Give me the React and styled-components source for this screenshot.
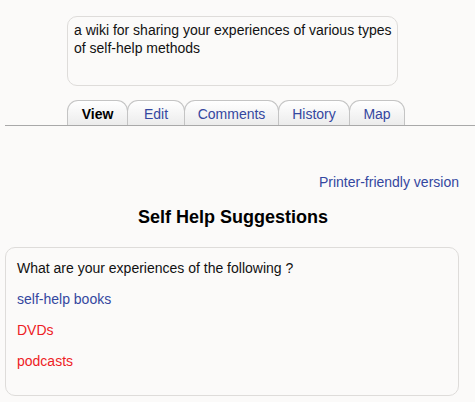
import React from "react";
import styled, { createGlobalStyle } from "styled-components";

const Global = createGlobalStyle`
  html, body { margin: 0; padding: 0; background: #fbfaf9; }
  body { font-family: "Liberation Sans", Arial, sans-serif; font-size: 14px; color: #111; }
`;

const Page = styled.div`
  padding-top: 16px;
  width: 475px;
`;

const Description = styled.div`
  margin-left: 67px;
  width: 331px;
  height: 70px;
  box-sizing: border-box;
  border: 1px solid #dedcda;
  border-radius: 10px;
  padding: 4px 0 4px 6px;
  line-height: 18px;
  color: #111;
`;

const TabBar = styled.div`
  margin-top: 14px;
  margin-left: 5px;
  padding-left: 62px;
  display: flex;
  border-bottom: 1px solid #a9a9a9;
  height: 25px;
  box-sizing: content-box;
`;

const Tab = styled.a`
  display: flex;
  align-items: center;
  justify-content: center;
  box-sizing: border-box;
  width: ${(p) => p.$w}px;
  height: 25px;
  margin-left: ${(p) => (p.$first ? 0 : -1)}px;
  border: 1px solid #c4c4c4;
  border-bottom: none;
  border-radius: 11px 11px 0 0;
  background: linear-gradient(#ffffff, #ececec);
  color: ${(p) => (p.$active ? "#000" : "#3447a0")};
  font-weight: ${(p) => (p.$active ? "bold" : "normal")};
  font-size: 14px;
  padding-top: 1px;
  text-decoration: none;
`;

const PrintRow = styled.div`
  margin-top: 48px;
  display: flex;
  justify-content: flex-end;
  padding-right: 16px;
  line-height: 16px;
`;

const Link = styled.a`
  color: ${(p) => (p.$missing ? "#ee1c25" : "#3447a0")};
  text-decoration: none;
`;

const Heading = styled.h2`
  margin: 17px 0 0;
  text-align: center;
  font-size: 18px;
  line-height: 21px;
  font-weight: bold;
  color: #000;
  padding-right: 9px;
`;

const ContentBox = styled.div`
  margin: 19px 0 0 5px;
  width: 454px;
  box-sizing: border-box;
  border: 1px solid #dedcda;
  border-radius: 10px;
  padding: 12px 11px 26px;
  display: flex;
  flex-direction: column;
  gap: 15px;
  line-height: 16px;
`;

const Line = styled.div`
  color: #111;
`;

const tabs = [
  { label: "View", w: 61, active: true },
  { label: "Edit", w: 58 },
  { label: "Comments", w: 95 },
  { label: "History", w: 72 },
  { label: "Map", w: 56 },
];

export default function App() {
  return (
    <>
      <Global />
      <Page>
        <Description>
          a wiki for sharing your experiences of various types of self-help methods
        </Description>
        <TabBar>
          {tabs.map((t, i) => (
            <Tab key={t.label} $w={t.w} $active={t.active} $first={i === 0}>
              {t.label}
            </Tab>
          ))}
        </TabBar>
        <PrintRow>
          <Link>Printer-friendly version</Link>
        </PrintRow>
        <Heading>Self Help Suggestions</Heading>
        <ContentBox>
          <Line>What are your experiences of the following ?</Line>
          <Line><Link>self-help books</Link></Line>
          <Line><Link $missing>DVDs</Link></Line>
          <Line><Link $missing>podcasts</Link></Line>
        </ContentBox>
      </Page>
    </>
  );
}
